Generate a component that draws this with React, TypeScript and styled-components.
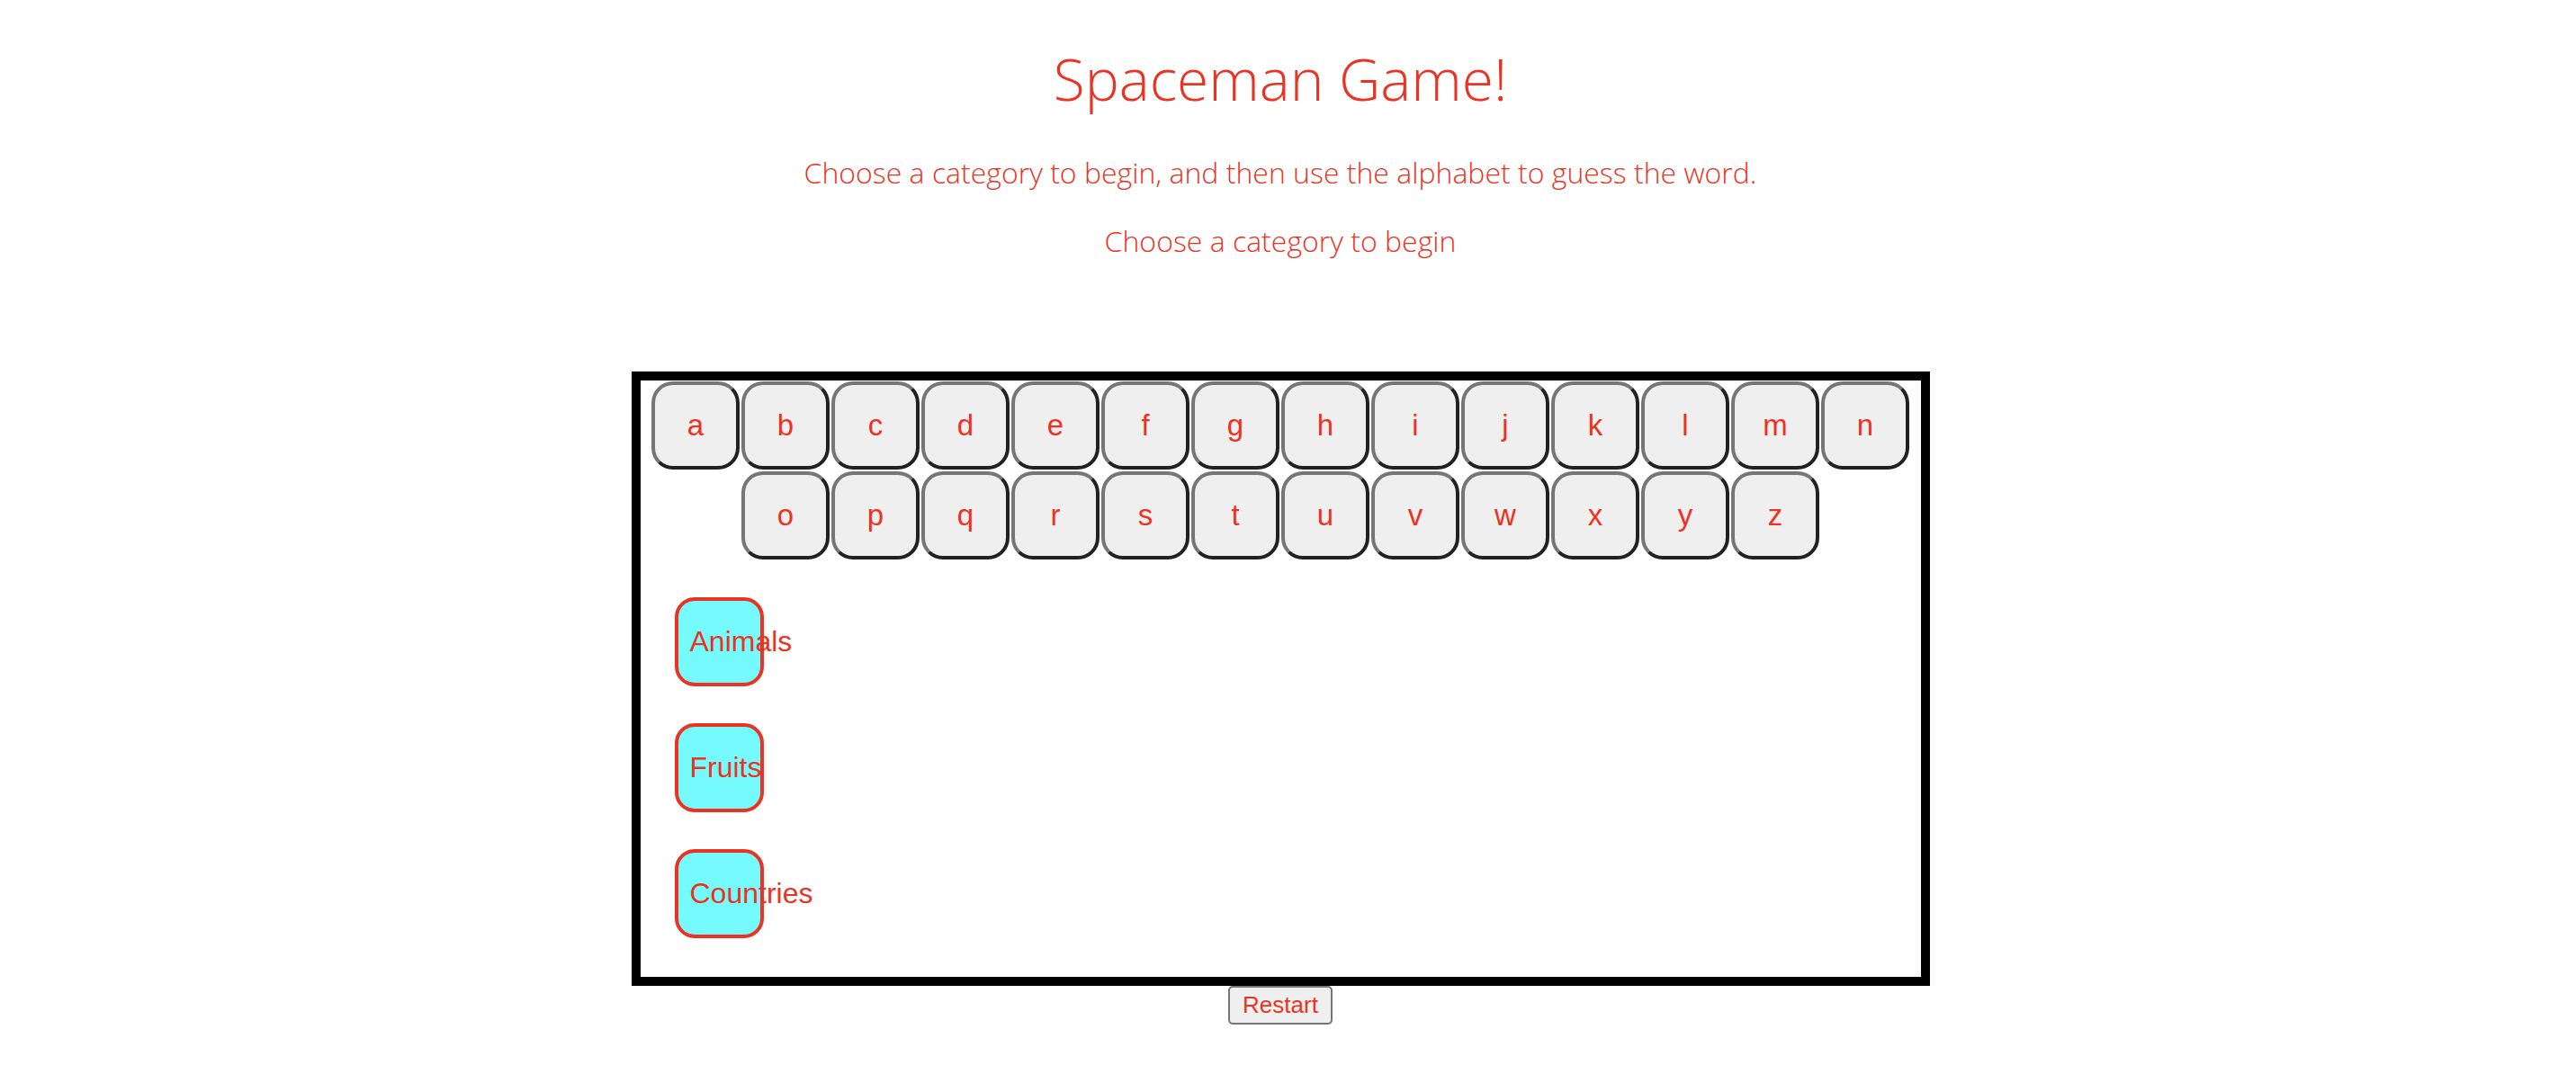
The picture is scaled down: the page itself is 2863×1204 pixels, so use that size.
import React from 'react';
import styled, { createGlobalStyle } from 'styled-components';

const GlobalStyle = createGlobalStyle`
  body {
    margin: 0;
    background: #ffffff;
  }
`;

const RED = 'rgb(234, 51, 35)';

const Page = styled.div`
  width: 2846px;
  padding-bottom: 40px;
`;

const Title = styled.h1`
  margin: 44px 0 0;
  text-align: center;
  font-family: 'Open Sans', sans-serif;
  font-weight: 300;
  font-size: 64px;
  color: ${RED};
`;

const Message = styled.p<{ $gap: number }>`
  margin: ${(p) => p.$gap}px 0 0;
  text-align: center;
  font-family: 'Open Sans', sans-serif;
  font-weight: 300;
  font-size: 32px;
  color: ${RED};
`;

const Board = styled.div`
  width: 50%;
  margin: 124px auto 0;
  border: 10px solid #000;
`;

const Keyboard = styled.div`
  display: flex;
  flex-wrap: wrap;
  justify-content: center;
`;

const Key = styled.button`
  width: 98px;
  height: 98px;
  margin: 1px;
  padding: 0;
  border: 4px outset #767676;
  border-radius: 24px;
  background: #efefef;
  color: ${RED};
  font-family: 'Liberation Sans', Arial, sans-serif;
  font-size: 33px;
`;

const Categories = styled.div`
  display: flex;
  flex-direction: column;
  align-items: flex-start;
  gap: 41px;
  padding: 41px 38px 43px;
`;

const CategoryButton = styled.button`
  width: 99px;
  height: 99px;
  padding: 0 13px;
  border: 4px solid ${RED};
  border-radius: 22px;
  background: rgb(117, 251, 253);
  color: ${RED};
  font-family: 'Liberation Sans', Arial, sans-serif;
  font-size: 32px;
  text-align: left;
  white-space: nowrap;
  overflow: visible;
`;

const Footer = styled.div`
  display: flex;
  justify-content: center;
`;

const RestartButton = styled.button`
  padding: 4px 14px;
  border: 2px solid #767676;
  border-radius: 5px;
  background: #efefef;
  color: ${RED};
  font-family: 'Liberation Sans', Arial, sans-serif;
  font-size: 26px;
`;

const letters = 'abcdefghijklmnopqrstuvwxyz'.split('');
const categories = ['Animals', 'Fruits', 'Countries'];

export default function App() {
  return (
    <>
      <GlobalStyle />
      <Page>
        <Title>Spaceman Game!</Title>
        <Message $gap={39}>
          Choose a category to begin, and then use the alphabet to guess the word.
        </Message>
        <Message $gap={33}>Choose a category to begin</Message>
        <Board>
          <Keyboard>
            {letters.map((l) => (
              <Key key={l}>{l}</Key>
            ))}
          </Keyboard>
          <Categories>
            {categories.map((c) => (
              <CategoryButton key={c}>{c}</CategoryButton>
            ))}
          </Categories>
        </Board>
        <Footer>
          <RestartButton>Restart</RestartButton>
        </Footer>
      </Page>
    </>
  );
}
